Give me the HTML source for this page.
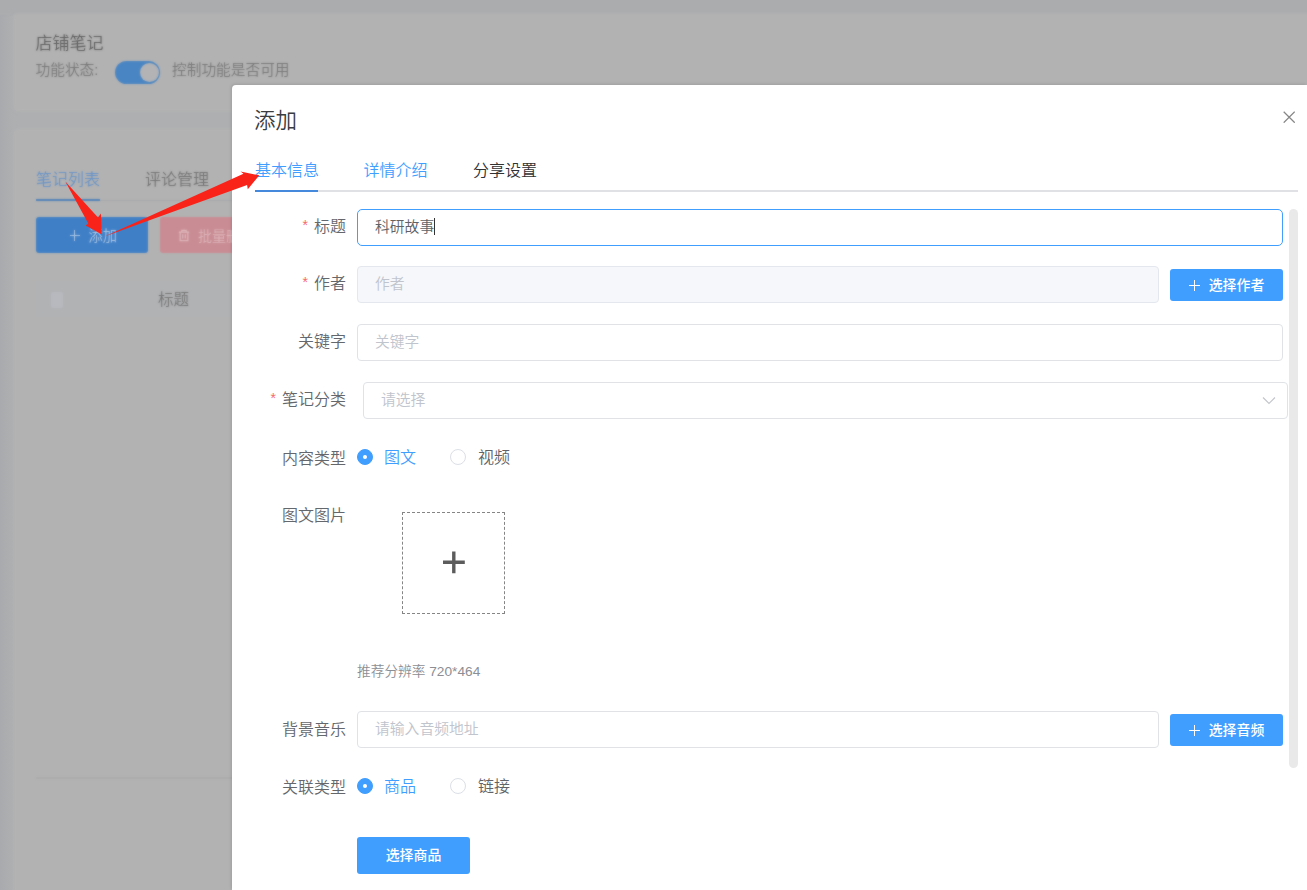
<!DOCTYPE html>
<html lang="zh-CN">
<head>
<meta charset="utf-8">
<title>店铺笔记 - 添加</title>
<style>
*{box-sizing:border-box;margin:0;padding:0}
html,body{width:1307px;height:890px;overflow:hidden}
body{position:relative;background:#f0f2f5;font-family:"Liberation Sans","Noto Sans CJK SC",sans-serif;font-size:14px;color:#606266}
.abs{position:absolute}
/* ---------- background page (blurred & dimmed) ---------- */
#bg{position:absolute;left:0;top:0;width:1307px;height:890px;background:linear-gradient(to right,#a8aaad 0,#acaeb0 9px,#aeafb1 14px);overflow:hidden}
#bgblur{position:absolute;left:0;top:0;width:1307px;height:890px;filter:url(#softblur);font-weight:350}
.card{position:absolute;background:#b2b2b2;border-radius:4px;box-shadow:0 0 2px 1px #b0b1b2}
/* ---------- dialog ---------- */
#dlg{position:absolute;left:232px;top:85px;width:1075px;height:805px;background:#fff;border-radius:4px 0 0 0;font-weight:350;box-shadow:-1px -1px 3px rgba(0,0,0,.1)}
.t{position:absolute;white-space:nowrap;line-height:1}
.lbl{position:absolute;white-space:nowrap;line-height:20px;height:20px;font-size:16px;color:#64676c;text-align:right;width:120px}
.lbl i{font-style:normal;color:#f56c6c;margin-right:6px;font-size:14px;position:relative;top:-2px}
.inp{position:absolute;height:36.5px;border:1px solid #e0e2e6;border-radius:4px;background:#fff;font-size:14.8px;line-height:34px;padding-left:17px;color:#606266;white-space:nowrap}
.inp.ph{color:#c0c4cc}
.plus{display:inline-block;position:relative;width:11px;height:11px;margin-right:9px;vertical-align:-1px}.plus:before{content:"";position:absolute;left:0;top:5px;width:11px;height:1px;background:#fff}.plus:after{content:"";position:absolute;left:5px;top:0;width:1px;height:11px;background:#fff}
.btn{position:absolute;font-weight:500;background:#409eff;color:#fff;border-radius:3px;font-size:13.9px;text-align:center;white-space:nowrap}
.radio{position:absolute;width:16px;height:16px;border-radius:50%;border:1px solid #dcdfe6;background:#fff}
.radio.on{border-color:#409eff;background:#409eff}
.radio.on:after{content:"";position:absolute;left:4.7px;top:4.7px;width:4.600px;height:4.600px;border-radius:50%;background:#fff}
</style>
</head>
<body>
<svg width="0" height="0" style="position:absolute"><defs><filter id="softblur" x="0" y="0" width="100%" height="100%" color-interpolation-filters="sRGB"><feGaussianBlur in="SourceGraphic" stdDeviation="1" result="b"/><feComposite in="b" in2="SourceGraphic" operator="arithmetic" k1="0" k2="0.6" k3="0.4" k4="0"/></filter></defs></svg>
<div id="bg">
 <div id="bgblur">
  <div class="abs" style="left:-5px;top:-5px;width:1320px;height:19.5px;background:#abacae"></div>
  <div class="card" style="left:14px;top:14px;width:1300px;height:97px"></div>
  <div class="t" style="left:35.5px;top:35px;font-size:17px;color:#575757">店铺笔记</div>
  <div class="t" style="left:35.5px;top:63px;font-size:14.7px;color:#737373">功能状态:</div>
  <div class="abs" style="left:114.5px;top:61px;width:45.5px;height:23px;border-radius:11.5px;background:#4985c3"></div>
  <div class="abs" style="left:139.5px;top:63px;width:19px;height:19px;border-radius:50%;background:#b3b3b5"></div>
  <div class="t" style="left:172px;top:63px;font-size:14.7px;color:#737373">控制功能是否可用</div>

  <div class="card" style="left:14px;top:129px;width:1300px;height:770px"></div>
  <div class="t" style="left:36px;top:172px;font-size:16px;color:#6491c8">笔记列表</div>
  <div class="t" style="left:145px;top:172px;font-size:16px;color:#6e6e6e">评论管理</div>
  <div class="abs" style="left:36px;top:199.5px;width:1250px;height:1px;background:#a7a8aa"></div>
  <div class="abs" style="left:36px;top:199px;width:64px;height:2px;background:#4f80b8"></div>
  <div class="abs" style="left:36px;top:217.3px;width:112px;height:36px;border-radius:3px;background:#3f7fc6"></div>
  <div class="abs" style="left:69.5px;top:235px;width:10.5px;height:1.200px;background:#b4cbe6"></div>
  <div class="abs" style="left:74.200px;top:230.300px;width:1.200px;height:10.500px;background:#b4cbe6"></div>
  <div class="t" style="left:88.500px;top:228.500px;font-size:14.3px;color:#b4cbe6">添加</div>
  <div class="abs" style="left:160px;top:217.3px;width:112.5px;height:36px;border-radius:3px;background:#c98c94"></div>
  <div class="t" style="left:198px;top:229px;font-size:14px;color:#dfb9bd">批量删除</div>
  <svg class="abs" style="left:178px;top:229px" width="12" height="13" viewBox="0 0 14 15"><path d="M1 3.5h12M4.5 3.5v-2h5v2M2.5 3.5v10h9v-10M5.5 6v5M8.500 6v5" stroke="#dfb9bd" stroke-width="1.4" fill="none"/></svg>
  <div class="abs" style="left:36px;top:281px;width:1250px;height:36px;background:#b1b2b4"></div>
  <div class="abs" style="left:50.5px;top:291.5px;width:12.5px;height:16px;border-radius:2px;background:#b7b9be"></div>
  <div class="t" style="left:158px;top:291.5px;font-size:15.5px;color:#707070">标题</div>
  <div class="abs" style="left:36px;top:777px;width:200px;height:1.500px;background:#acacad"></div>
 </div>
</div>

<div id="dlg">
 <div class="t" style="left:22px;top:26px;font-size:21.5px;color:#3a3c40">添加</div>
 <svg class="abs" style="left:1050.5px;top:25.5px" width="12.4" height="12.4" viewBox="0 0 12.4 12.4"><path d="M0.700 0.700L11.700 11.700M11.700 0.700L0.700 11.700" stroke="#868686" stroke-width="1.25" fill="none"/></svg>

 <!-- tabs -->
 <div class="t" style="left:23px;top:77.5px;font-size:16px;color:#409eff">基本信息</div>
 <div class="t" style="left:131.5px;top:77.5px;font-size:16px;color:#409eff">详情介绍</div>
 <div class="t" style="left:241px;top:77.5px;font-size:16px;color:#303133">分享设置</div>
 <div class="abs" style="left:23px;top:105px;width:1042.5px;height:2px;background:#e0e1e4"></div>
 <div class="abs" style="left:23px;top:105px;width:63px;height:2px;background:#4489dc"></div>

 <!-- row 1 -->
 <div class="lbl" style="left:-6px;top:132px"><i>*</i>标题</div>
 <div class="inp" style="left:125px;top:124px;width:926px;border-color:#409eff;border-radius:5px">科研故事<span style="display:inline-block;width:1px;height:17px;background:#333;vertical-align:-3px"></span></div>

 <!-- row 2 -->
 <div class="lbl" style="left:-6px;top:189px"><i>*</i>作者</div>
 <div class="inp ph" style="left:125px;top:181px;width:802px;background:#f5f7fa;border-color:#e4e7ed">作者</div>
 <div class="btn" style="left:938px;top:184px;width:113px;height:32px;line-height:32px"><b class="plus"></b>选择作者</div>

 <!-- row 3 -->
 <div class="lbl" style="left:-6px;top:247px">关键字</div>
 <div class="inp ph" style="left:125px;top:239px;width:926px">关键字</div>

 <!-- row 4 -->
 <div class="lbl" style="left:-6px;top:305px"><i>*</i>笔记分类</div>
 <div class="inp ph" style="left:131px;top:297px;width:924.5px">请选择</div>
 <svg class="abs" style="left:1029.5px;top:311px" width="14" height="9" viewBox="0 0 14 9"><path d="M1 1.5L7 7.5L13 1.5" stroke="#c4c6cc" stroke-width="1.2" fill="none"/></svg>

 <!-- row 5 -->
 <div class="lbl" style="left:-6px;top:364px">内容类型</div>
 <div class="radio on" style="left:125px;top:364px"></div>
 <div class="t" style="left:152px;top:365px;font-size:16px;color:#409eff">图文</div>
 <div class="radio" style="left:218px;top:364px"></div>
 <div class="t" style="left:246px;top:365px;font-size:16px;color:#606266">视频</div>

 <!-- row 6 -->
 <div class="lbl" style="left:-6px;top:421px">图文图片</div>
 <div class="abs" style="left:170px;top:427px;width:103px;height:102px;border:1px dashed #858585;"></div>
 <svg class="abs" style="left:210px;top:466px" width="24" height="24" viewBox="0 0 24 24"><path d="M1 11.300H22.800M11.800 0.500V22.200" stroke="#5c5c5c" stroke-width="3.400" fill="none"/></svg>
  <div class="t" style="left:125px;top:580px;font-size:13.7px;color:#8c8e93">推荐分辨率 720*464</div>

 <!-- row 7 -->
 <div class="lbl" style="left:-6px;top:635px">背景音乐</div>
 <div class="inp ph" style="left:125px;top:626px;width:802px">请输入音频地址</div>
 <div class="btn" style="left:938px;top:629px;width:113px;height:32px;line-height:32px"><b class="plus"></b>选择音频</div>

 <!-- row 8 -->
 <div class="lbl" style="left:-6px;top:693px">关联类型</div>
 <div class="radio on" style="left:125px;top:693px"></div>
 <div class="t" style="left:152px;top:694px;font-size:16px;color:#409eff">商品</div>
 <div class="radio" style="left:218px;top:693px"></div>
 <div class="t" style="left:246px;top:694px;font-size:16px;color:#606266">链接</div>

 <div class="btn" style="left:125px;top:752px;width:113px;height:37px;line-height:36px">选择商品</div>

 <!-- scrollbar -->
 <div class="abs" style="left:1056.5px;top:124px;width:9px;height:559px;border-radius:4.5px;background:#e9e9e9"></div>
</div>
<!-- red annotation arrows -->
<svg class="abs" style="left:0;top:0" width="1307" height="890" viewBox="0 0 1307 890">
 <g fill="#f9231a">
  <polygon points="65.3,181.600 98,217.400 100.900,213.400 101.800,234.600 85.600,225.400 88.300,223.500"/>
  <polygon points="104.5,236.400 243.500,173.700 240.500,171.500 259.300,175.300 247.800,189.300 247.100,184.900"/>
 </g>
</svg>
</body>
</html>
